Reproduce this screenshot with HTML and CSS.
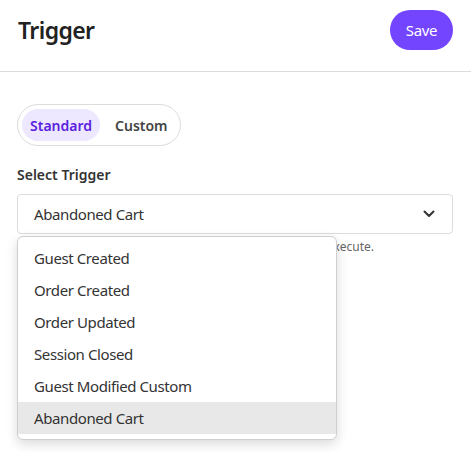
FILE: index.html
```html
<!DOCTYPE html>
<html>
<head>
<meta charset="utf-8">
<link rel="stylesheet" href="styles.css">
</head>
<body>
<header class="topbar">
  <h1 class="title">Trigger</h1>
  <button class="save-btn">Save</button>
</header>
<main class="content">
  <div class="segmented">
    <span class="seg seg-active">Standard</span>
    <span class="seg">Custom</span>
  </div>
  <label class="field-label">Select Trigger</label>
  <div class="field">
    <div class="select">
      <span>Abandoned Cart</span>
      <svg class="chevron" width="12" height="8" viewBox="0 0 12 8"><path d="M1.5 1.5 L6 6 L10.5 1.5" fill="none" stroke="#333" stroke-width="2" stroke-linecap="round" stroke-linejoin="round"/></svg>
    </div>
    <p class="help">Select the event that will cause this automation to execute.</p>
    <ul class="menu">
      <li class="item">Guest Created</li>
      <li class="item">Order Created</li>
      <li class="item">Order Updated</li>
      <li class="item">Session Closed</li>
      <li class="item">Guest Modified Custom</li>
      <li class="item item-active">Abandoned Cart</li>
    </ul>
  </div>
</main>
</body>
</html>
```
FILE: styles.css
```css
* { box-sizing: border-box; }
html, body { min-height: 100vh; }
body {
  margin: 0;
  font-family: "Noto Sans", "Open Sans", sans-serif;
  color: #2b2b2b;
  background: #fff;
}
.topbar {
  height: 72px;
  display: flex;
  align-items: flex-start;
  justify-content: space-between;
  padding: 10px 18px 0;
  border-bottom: 1px solid #dcdcdc;
}
.title {
  margin: 0;
  line-height: 40px;
  font-size: 23px;
  font-weight: 600;
  color: #222;
  letter-spacing: -0.6px;
}
.save-btn {
  width: 63px;
  height: 40px;
  border: none;
  border-radius: 20px;
  background: #7445ff;
  color: #fff;
  font-family: inherit;
  font-size: 15px;
  letter-spacing: -0.3px;
}
.content {
  padding: 32px 18px 0 17px;
}
.segmented {
  display: inline-flex;
  align-items: center;
  height: 42px;
  padding: 4px;
  border: 1px solid #dcdcdc;
  border-radius: 21px;
}
.seg {
  height: 32px;
  display: flex;
  align-items: center;
  padding: 0 8px;
  border-radius: 16px;
  font-size: 14px;
  font-weight: 600;
  color: #444;
}
.seg + .seg { padding-left: 15px; }
.seg-active {
  background: #ede7ff;
  color: #5a22e0;
}
.field-label {
  display: block;
  margin-top: 19px;
  font-size: 14px;
  font-weight: 600;
  color: #333;
  line-height: 20px;
}
.field {
  position: relative;
  margin-top: 9px;
}
.select {
  height: 40px;
  display: flex;
  align-items: center;
  justify-content: space-between;
  padding: 0 17px 0 16px;
  border: 1px solid #dcdcdc;
  border-radius: 4px;
  font-size: 15px;
  letter-spacing: -0.4px;
  color: #333;
}
.help {
  margin: 5px 0 0;
  font-size: 12px;
  color: #666;
  line-height: 16px;
  text-align: right;
  padding-right: 79px;
}
.menu {
  position: absolute;
  left: 0;
  top: 42px;
  width: 320px;
  margin: 0;
  padding: 5px 0;
  list-style: none;
  background: #fff;
  border: 1px solid #cfcfcf;
  border-radius: 6px;
  box-shadow: 0 4px 12px rgba(0,0,0,0.15);
}
.item {
  height: 32px;
  display: flex;
  align-items: center;
  padding-left: 16px;
  font-size: 15px;
  letter-spacing: -0.4px;
  color: #333;
}
.item-active {
  background: #e8e8e8;
}
```
